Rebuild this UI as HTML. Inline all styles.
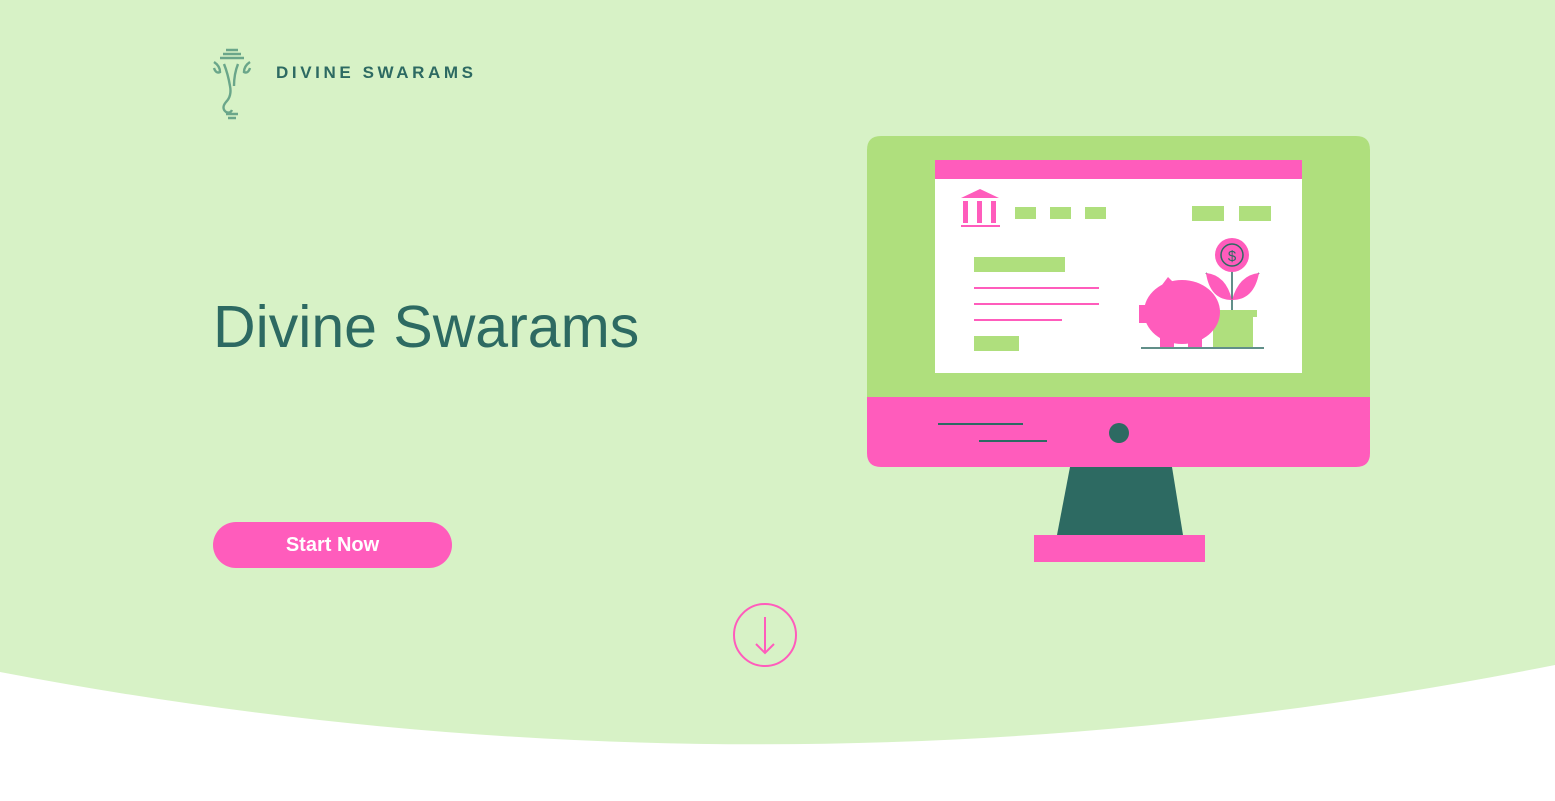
<!DOCTYPE html>
<html><head><meta charset="utf-8"><style>
html,body{margin:0;padding:0}
body{width:1555px;height:801px;position:relative;overflow:hidden;background:#fff;font-family:"Liberation Sans",sans-serif}
.abs{position:absolute}
</style></head><body>
<svg class="abs" style="left:0;top:0" width="1555" height="801">
<path d="M0 0H1555V665Q777 820 0 672Z" fill="#d7f2c6"/>
<g fill="none" stroke="#6aa68a" stroke-width="2.4">
<path d="M226 50h12M223 54h18M220 58h24"/>
<path d="M214 62q6 4 6 10q-4 2-6 -4M250 62q-6 4 -6 10q4 2 6 -4"/>
<path d="M224 64q4 10 6 22q2 10 -4 16q-5 6 0 10q4 2 6-2M238 64q-4 10 -4 22"/>
<path d="M226 114h12M228 118h8"/>
</g>
<path d="M881 136H1356Q1370 136 1370 150V397H867V150Q867 136 881 136Z" fill="#afdf7d"/>
<path d="M867 397H1370V453Q1370 467 1356 467H881Q867 467 867 453Z" fill="#ff5cbc"/>
<rect x="935" y="160" width="367" height="213" fill="#fff"/>
<rect x="935" y="160" width="367" height="19" fill="#ff5cbc"/>
<path d="M1070 467H1172L1183 535H1057Z" fill="#2d6a62"/>
<rect x="1034" y="535" width="171" height="27" fill="#ff5cbc"/>
<circle cx="1119" cy="433" r="10" fill="#2d6a62"/>
<path d="M938 424H1023M979 441H1047" stroke="#2d6a62" stroke-width="2"/>
<g fill="#ff5cbc"><path d="M961 198L980 189L999 198Z"/><rect x="963" y="201" width="5" height="22"/><rect x="977" y="201" width="5" height="22"/><rect x="991" y="201" width="5" height="22"/><rect x="961" y="225" width="39" height="2"/></g>
<g fill="#afdf7d"><rect x="1015" y="207" width="21" height="12"/><rect x="1050" y="207" width="21" height="12"/><rect x="1085" y="207" width="21" height="12"/><rect x="1192" y="206" width="32" height="15"/><rect x="1239" y="206" width="32" height="15"/><rect x="974" y="257" width="91" height="15"/><rect x="974" y="336" width="45" height="15"/><rect x="1208" y="310" width="49" height="7"/><rect x="1213" y="317" width="40" height="30"/></g>
<path d="M974 288H1099M974 304H1099M974 320H1062" stroke="#ff5cbc" stroke-width="2"/>
<ellipse cx="1182" cy="312" rx="38" ry="32" fill="#ff5cbc"/>
<rect x="1139" y="305" width="14" height="18" fill="#ff5cbc"/>
<rect x="1160" y="325" width="14" height="22" fill="#ff5cbc"/>
<rect x="1188" y="325" width="14" height="22" fill="#ff5cbc"/>
<path d="M1162 285l6-8 8 8z" fill="#ff5cbc"/>
<path d="M1141 348H1264" stroke="#2d6a62" stroke-width="1.5"/>
<path d="M1232 268V310M1232 300L1206 273M1232 300L1259 273" stroke="#2d6a62" stroke-width="1.5" fill="none"/>
<path d="M1206 273q20 2 26 27q-22 0-26-27zM1259 273q-20 2-27 27q22 0 27-27z" fill="#ff5cbc"/>
<circle cx="1232" cy="255" r="17" fill="#ff5cbc"/>
<circle cx="1232" cy="255" r="11" fill="none" stroke="#2d6a62" stroke-width="1.5"/>
<text x="1232" y="261" font-size="15" text-anchor="middle" fill="#2d6a62" font-family="Liberation Sans">$</text>
<circle cx="765" cy="635" r="31" fill="none" stroke="#ff5cbc" stroke-width="2"/>
<path d="M765 617V653M756 644L765 653L774 644" fill="none" stroke="#ff5cbc" stroke-width="2"/>
</svg>
<div class="abs" style="left:276px;top:63px;font-size:17px;font-weight:bold;letter-spacing:3.6px;color:#2d6a62">DIVINE SWARAMS</div>
<div class="abs" style="left:213px;top:292px;font-size:59px;color:#2d6a62;line-height:70px">Divine Swarams</div>
<div class="abs" style="left:213px;top:522px;width:239px;height:46px;border-radius:23px;background:#ff5cbc;color:#fff;font-size:20px;font-weight:bold;text-align:center;line-height:46px">Start Now</div>
</body></html>
